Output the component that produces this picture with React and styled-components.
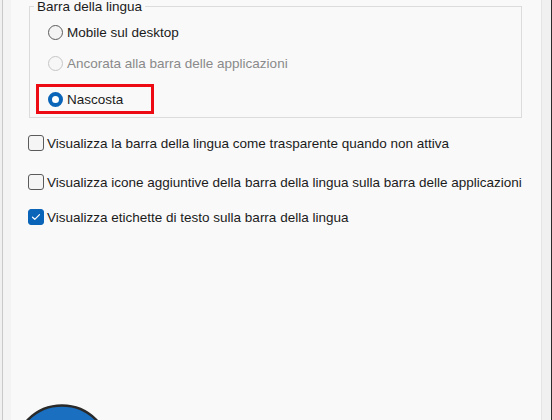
import styled, { createGlobalStyle } from 'styled-components';

const GlobalStyle = createGlobalStyle`
  html, body {
    margin: 0;
    padding: 0;
    background: #f9f9f9;
  }
  body {
    font-family: 'Liberation Sans', Arial, sans-serif;
    font-size: 13.5px;
    color: #1b1b1b;
    overflow: hidden;
  }
`;

const Window = styled.div`
  display: flex;
  height: 420px;
  overflow: hidden;
`;

const LeftEdge = styled.div`
  flex: 0 0 11px;
  box-sizing: border-box;
  background: #f3f3f3;
  border-left: 2px solid #f0f0f0;
  box-shadow: inset 1px 0 0 #c9c9c9;
`;

const RightEdge = styled.div`
  flex: 0 0 11px;
  box-sizing: border-box;
  background: #f0f0f0;
  border-left: 1px solid #e4e4e4;
  border-right: 1px solid #2b2b2b;
`;

const Content = styled.div`
  flex: 1;
  display: flex;
  flex-direction: column;
  padding: 0 19px 0 18px;
  min-width: 0;
`;

const Group = styled.fieldset`
  margin: 0;
  padding: 4px 0 3px 4px;
  border: 1px solid #dcdcdc;
  min-width: 0;
  display: flex;
  flex-direction: column;
  gap: 1px;
`;

const Legend = styled.legend`
  padding: 0 3px;
  line-height: 13px;
  height: 13px;
`;

const Option = styled.label`
  display: flex;
  align-items: center;
  gap: 4px;
  height: 30px;
  padding-left: 14px;
  color: ${p => (p.$disabled ? '#8a8a8a' : '#1b1b1b')};
`;

const Highlight = styled.div`
  display: flex;
  align-items: center;
  gap: 4px;
  box-sizing: border-box;
  width: 118px;
  height: 30px;
  margin: 5px 0 0 2px;
  padding-left: 9px;
  border: 3px solid #ee0a12;
`;

const Radio = styled.span`
  box-sizing: border-box;
  flex: 0 0 15px;
  width: 15px;
  height: 15px;
  border-radius: 50%;
  background: ${p => (p.$checked ? '#fff' : p.$disabled ? '#f7f7f7' : '#f4f4f4')};
  border: ${p =>
    p.$checked
      ? '4.5px solid #0a64b8'
      : p.$disabled
      ? '1px solid #c6c6c6'
      : '1px solid #5c5c5c'};
`;

const CheckRow = styled.label`
  display: flex;
  align-items: center;
  gap: 3px;
  height: 20px;
  margin: ${p => p.$top}px 0 0 -1px;
  white-space: nowrap;
`;

const Box = styled.span`
  box-sizing: border-box;
  flex: 0 0 16px;
  width: 16px;
  height: 16px;
  border-radius: 3px;
  display: flex;
  align-items: center;
  justify-content: center;
  background: ${p => (p.$checked ? '#0a64b8' : '#f5f5f5')};
  border: 1px solid ${p => (p.$checked ? '#0a64b8' : '#5a5a5a')};
`;

const Badge = styled.div`
  margin: 179px 0 0 -20px;
  line-height: 0;
`;

const checks = [
  { text: 'Visualizza la barra della lingua come trasparente quando non attiva', top: 17 },
  {
    text: 'Visualizza icone aggiuntive della barra della lingua sulla barra delle applicazioni',
    top: 23,
  },
  { text: 'Visualizza etichette di testo sulla barra della lingua', top: 19, checked: true },
];

export default function App() {
  return (
    <>
      <GlobalStyle />
      <Window>
        <LeftEdge />
        <Content>
          <Group>
            <Legend>Barra della lingua</Legend>
            <Option>
              <Radio />
              Mobile sul desktop
            </Option>
            <Option $disabled>
              <Radio $disabled />
              Ancorata alla barra delle applicazioni
            </Option>
            <Highlight>
              <Radio $checked />
              Nascosta
            </Highlight>
          </Group>

          {checks.map(c => (
            <CheckRow key={c.text} $top={c.top}>
              <Box $checked={c.checked}>
                {c.checked && (
                  <svg width="10" height="8" viewBox="0 0 10 8">
                    <path
                      d="M1.5 4.2 L3.8 6.3 L8.5 1.6"
                      fill="none"
                      stroke="#fff"
                      strokeWidth="1.2"
                      strokeLinecap="round"
                      strokeLinejoin="round"
                    />
                  </svg>
                )}
              </Box>
              {c.text}
            </CheckRow>
          ))}

          <Badge>
            <svg width="110" height="110" viewBox="0 0 110 110">
              <circle cx="53" cy="49.5" r="48" fill="#1a6fc0" stroke="#2a2a2a" strokeWidth="2.5" />
            </svg>
          </Badge>
        </Content>
        <RightEdge />
      </Window>
    </>
  );
}
